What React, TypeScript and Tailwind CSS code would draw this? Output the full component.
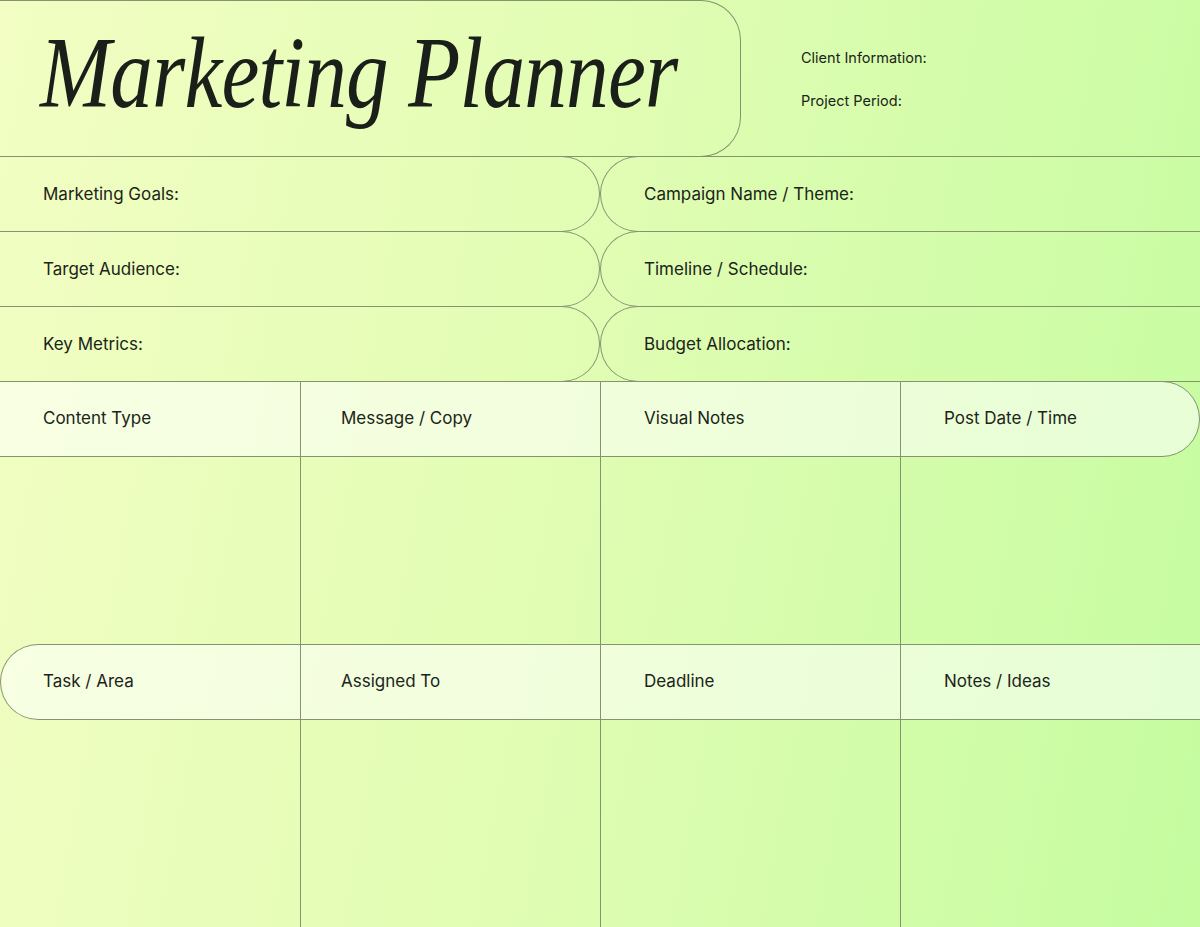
import React from "react";

const line = "border-[#84946f]";

function HeaderRow({
  labels,
  variant,
}: {
  labels: string[];
  variant: "right" | "left";
}) {
  const pads =
    variant === "left"
      ? ["pl-[42px]", "pl-[40px]", "pl-[43px]", "pl-[43px]"]
      : ["pl-[43px]", "pl-[40px]", "pl-[43px]", "pl-[43px]"];
  return (
    <div className="grid grid-cols-4 h-[76px] -mt-px shrink-0">
      {labels.map((l, i) => {
        let cls = `flex items-center border-y ${line} bg-white/55 ${pads[i]}`;
        if (i > 0) cls += ` border-l`;
        if (variant === "right" && i === 3) cls += ` border-r rounded-r-full`;
        if (variant === "left" && i === 0) cls += ` border-l rounded-l-full`;
        return (
          <div key={l} className={cls}>
            <span>{l}</span>
          </div>
        );
      })}
    </div>
  );
}

function Body({ h }: { h: string }) {
  return (
    <div className={`grid grid-cols-4 ${h} -mt-px`}>
      <div />
      <div className={`border-l ${line}`} />
      <div className={`border-l ${line}`} />
      <div className={`border-l ${line}`} />
    </div>
  );
}

export default function App() {
  const rows = [
    ["Marketing Goals:", "Campaign Name / Theme:"],
    ["Target Audience:", "Timeline / Schedule:"],
    ["Key Metrics:", "Budget Allocation:"],
  ];
  return (
    <div
      className="w-[1200px] h-[927px] overflow-hidden flex flex-col text-[17px] text-[#1b2419] bg-[linear-gradient(100deg,#f2fec3_0%,#e2fdb4_45%,#c5fca0_100%)]"
      style={{ fontFamily: "Inter, 'Noto Sans', sans-serif" }}
    >
      {/* Top */}
      <div className="flex h-[157px] shrink-0">
        <div
          className={`w-[741px] h-[157px] border-y border-r ${line} rounded-r-[40px] pl-[40px] flex items-start`}
        >
          <span
            className="inline-block origin-left scale-x-[0.845] mt-[22px] text-[101px] leading-[1] italic tracking-[-0.01em] text-[#1b1f1a] whitespace-nowrap"
            style={{ fontFamily: "'Liberation Serif', 'DejaVu Serif', serif" }}
          >
            Marketing Planner
          </span>
        </div>
        <div className={`flex-1 border-b ${line} pl-[60px] pt-[48px] flex flex-col gap-[24px] text-[14.5px] leading-[19px]`}>
          <span>Client Information:</span>
          <span>Project Period:</span>
        </div>
      </div>

      {rows.map(([a, b]) => (
        <div key={a} className="flex h-[76px] -mt-px shrink-0">
          <div className={`w-[600px] flex items-center pl-[43px] pt-px border-y border-r ${line} rounded-r-full`}>
            {a}
          </div>
          <div className={`flex-1 flex items-center pl-[43px] pt-px border-y border-l ${line} rounded-l-full`}>
            {b}
          </div>
        </div>
      ))}

      <HeaderRow
        labels={["Content Type", "Message / Copy", "Visual Notes", "Post Date / Time"]}
        variant="right"
      />
      <Body h="h-[189px]" />
      <HeaderRow
        labels={["Task / Area", "Assigned To", "Deadline", "Notes / Ideas"]}
        variant="left"
      />
      <Body h="flex-1" />
    </div>
  );
}
